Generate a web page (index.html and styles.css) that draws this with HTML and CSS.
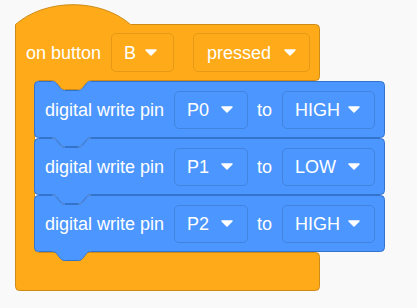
FILE: index.html
```html
<!DOCTYPE html>
<html lang="en">
  <head>
    <meta charset="UTF-8" />
    <meta name="viewport" content="width=device-width, initial-scale=1.0" />
    <title>on button pressed</title>
    <link rel="stylesheet" href="styles.css">
  </head>
  <body>
    <div class="workspace">
      <div class="c-block">
        <!-- C shaped event block: hat, arm and foot -->
        <svg class="shape" width="305" height="287">
          <path
            class="shape-orange"
            d="M0.5,20.5 c30,-26.4 85,-26.4 115,0 H300.5 a4,4 0 0 1 4,4 V72.5 a4,4 0 0 1 -4,4 H75.5 c-2,0 -3,1 -4,2 l-4,5 c-1,1 -2,2 -4,2 h-14 c-2,0 -3,-1 -4,-2 l-4,-5 c-1,-1 -2,-2 -4,-2 H23.5 a4,4 0 0 0 -4,4 V244.5 a4,4 0 0 0 4,4 H300.5 a4,4 0 0 1 4,4 V282.5 a4,4 0 0 1 -4,4 H4.5 a4,4 0 0 1 -4,-4 Z"
          />
        </svg>
        <div class="hat-row">
          <span class="label">on button</span>
          <div class="dropdown orange first">
            <span>B</span>
            <svg class="arrow" width="12" height="7"><path d="M1 1 H11 L6 6 Z" /></svg>
          </div>
          <div class="dropdown orange second">
            <span>pressed</span>
            <svg class="arrow" width="12" height="7"><path d="M1 1 H11 L6 6 Z" /></svg>
          </div>
        </div>
        <div class="c-body">
          <div class="block">
            <svg class="shape" width="351" height="57">
              <path class="shape-blue" d="M0.5,4.5 a4,4 0 0 1 4,-4 H18.5 c2,0 3,1 4,2 l4,5 c1,1 2,2 4,2 h14 c2,0 3,-1 4,-2 l4,-5 c1,-1 2,-2 4,-2 H346.5 a4,4 0 0 1 4,4 V52.5 a4,4 0 0 1 -4,4 H56.5 c-2,0 -3,1 -4,2 l-4,5 c-1,1 -2,2 -4,2 h-14 c-2,0 -3,-1 -4,-2 l-4,-5 c-1,-1 -2,-2 -4,-2 H4.5 a4,4 0 0 1 -4,-4 Z" />
            </svg>
            <span class="label">digital write pin</span>
            <div class="dropdown blue pin">
              <span>P0</span>
              <svg class="arrow" width="12" height="7"><path d="M1 1 H11 L6 6 Z" /></svg>
            </div>
            <span class="label to">to</span>
            <div class="dropdown blue level">
              <span>HIGH</span>
              <svg class="arrow" width="12" height="7"><path d="M1 1 H11 L6 6 Z" /></svg>
            </div>
          </div>
          <div class="block">
            <svg class="shape" width="351" height="57">
              <path class="shape-blue" d="M0.5,4.5 a4,4 0 0 1 4,-4 H18.5 c2,0 3,1 4,2 l4,5 c1,1 2,2 4,2 h14 c2,0 3,-1 4,-2 l4,-5 c1,-1 2,-2 4,-2 H346.5 a4,4 0 0 1 4,4 V52.5 a4,4 0 0 1 -4,4 H56.5 c-2,0 -3,1 -4,2 l-4,5 c-1,1 -2,2 -4,2 h-14 c-2,0 -3,-1 -4,-2 l-4,-5 c-1,-1 -2,-2 -4,-2 H4.5 a4,4 0 0 1 -4,-4 Z" />
            </svg>
            <span class="label">digital write pin</span>
            <div class="dropdown blue pin">
              <span>P1</span>
              <svg class="arrow" width="12" height="7"><path d="M1 1 H11 L6 6 Z" /></svg>
            </div>
            <span class="label to">to</span>
            <div class="dropdown blue level">
              <span>LOW</span>
              <svg class="arrow" width="12" height="7"><path d="M1 1 H11 L6 6 Z" /></svg>
            </div>
          </div>
          <div class="block">
            <svg class="shape" width="351" height="57">
              <path class="shape-blue" d="M0.5,4.5 a4,4 0 0 1 4,-4 H18.5 c2,0 3,1 4,2 l4,5 c1,1 2,2 4,2 h14 c2,0 3,-1 4,-2 l4,-5 c1,-1 2,-2 4,-2 H346.5 a4,4 0 0 1 4,4 V52.5 a4,4 0 0 1 -4,4 H56.5 c-2,0 -3,1 -4,2 l-4,5 c-1,1 -2,2 -4,2 h-14 c-2,0 -3,-1 -4,-2 l-4,-5 c-1,-1 -2,-2 -4,-2 H4.5 a4,4 0 0 1 -4,-4 Z" />
            </svg>
            <span class="label">digital write pin</span>
            <div class="dropdown blue pin">
              <span>P2</span>
              <svg class="arrow" width="12" height="7"><path d="M1 1 H11 L6 6 Z" /></svg>
            </div>
            <span class="label to">to</span>
            <div class="dropdown blue level">
              <span>HIGH</span>
              <svg class="arrow" width="12" height="7"><path d="M1 1 H11 L6 6 Z" /></svg>
            </div>
          </div>
        </div>
        <div class="c-foot"></div>
      </div>
    </div>
  </body>
</html>
```

FILE: styles.css
```css
* {
  margin: 0;
  padding: 0;
  box-sizing: border-box;
}
html,
body {
  width: 100%;
  height: 100%;
  overflow: hidden;
  background: #f9f9f9;
  font-family: "Liberation Sans", Arial, sans-serif;
  font-size: 18px;
  color: #fff;
}
.workspace {
  padding: 4px 0 0 15px;
}
.c-block {
  position: relative;
  width: 305px;
  padding-top: 20px;
}
.shape {
  position: absolute;
  top: 0;
  left: 0;
  overflow: visible;
}
.shape-orange {
  fill: #ffab19;
  stroke: #cf8b17;
  stroke-width: 1;
}
.shape-blue {
  fill: #4c97ff;
  stroke: #3373cc;
  stroke-width: 1;
}
.hat-row {
  position: relative;
  height: 57px;
  display: flex;
  align-items: center;
  padding: 0 10px 0 11px;
}
.c-body {
  padding-left: 19px;
}
.c-foot {
  height: 39px;
}
.block {
  position: relative;
  width: 351px;
  height: 57px;
  display: flex;
  align-items: center;
  padding: 0 10px 0 11px;
}
.label {
  position: relative;
  white-space: nowrap;
  line-height: 1;
}
.dropdown {
  position: relative;
  display: flex;
  align-items: center;
  justify-content: space-between;
  flex-shrink: 0;
  height: 38px;
  padding: 0 14px 0 12px;
  border-radius: 5px;
  line-height: 1;
}
.arrow {
  flex-shrink: 0;
}
.arrow path {
  fill: #fff;
  stroke: #fff;
  stroke-width: 1.5;
  stroke-linejoin: round;
}
.dropdown.orange {
  height: 39px;
  border: 1px solid rgba(0, 0, 0, 0.1);
}
.dropdown.blue {
  border: 1px solid rgba(0, 0, 0, 0.13);
}
.dropdown.first {
  margin-left: 10px;
  width: 63px;
  padding: 0 16px 0 12px;
}
.dropdown.second {
  margin-left: 19px;
  width: 117px;
  padding: 0 13px 0 13px;
}
.dropdown.pin {
  margin-left: 10px;
  width: 74px;
}
.to {
  margin: 0 10px 0 9px;
}
.dropdown.level {
  width: 93px;
}
```
